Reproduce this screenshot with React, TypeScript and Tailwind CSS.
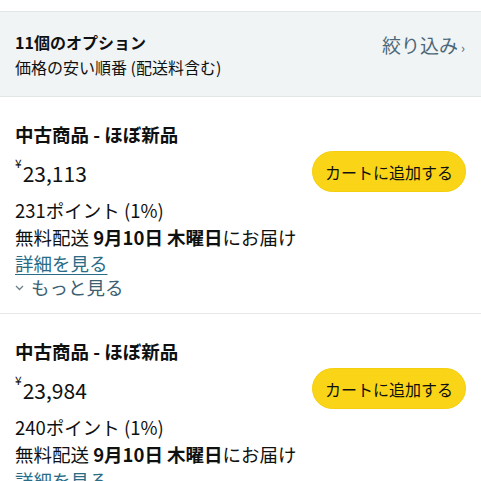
import React from 'react';

const font = { fontFamily: '"Noto Sans CJK JP", "Noto Sans", sans-serif' };

interface Offer {
  condition: string;
  price: string;
  points: string;
}

const offers: Offer[] = [
  { condition: '中古商品 - ほぼ新品', price: '23,113', points: '231ポイント (1%)' },
  { condition: '中古商品 - ほぼ新品', price: '23,984', points: '240ポイント (1%)' },
];

const OfferCard: React.FC<{ offer: Offer }> = ({ offer }) => (
  <div className="border-b border-[#e7e7e7] px-[15px] pt-[23px] pb-[14px]">
    <div className="text-[18.5px] font-bold leading-[28px] text-[#0f1111]">{offer.condition}</div>
    <div className="mt-[8px] flex h-[34px] items-center justify-between">
      <div className="flex items-start leading-[34px] text-[#0f1111]">
        <span className="mt-[-3px] mr-[1px] text-[12px] leading-[20px]">¥</span>
        <span className="text-[21px]">{offer.price}</span>
      </div>
      <button className="mt-[-3px] h-[41px] w-[154px] shrink-0 rounded-full border border-[#f5cf0e] bg-[#fad416] text-[16px] text-[#0f1111]">
        カートに追加する
      </button>
    </div>
    <div className="mt-[6px] text-[18.5px] leading-[28px] text-[#0f1111]">{offer.points}</div>
    <div className="text-[18.5px] leading-[27px] text-[#0f1111]">
      無料配送 <span className="font-bold">9月10日 木曜日</span>にお届け
    </div>
    <div className="text-[18.5px] leading-[24px] text-[#2a6c86] underline underline-offset-[3px]">詳細を見る</div>
    <div className="flex items-center gap-[7px] text-[18.5px] leading-[24px] text-[#3d5f72]">
      <svg width="9" height="6" viewBox="0 0 9 6" className="mt-[2px]">
        <path d="M1 1l3.5 3.5L8 1" fill="none" stroke="#6b7f8a" strokeWidth="1.3" />
      </svg>
      もっと見る
    </div>
  </div>
);

export default function App() {
  return (
    <div className="h-[481px] w-[481px] overflow-hidden bg-white" style={font}>
      <div className="h-[11px] bg-white" />
      <div className="flex items-start justify-between border-y border-[#e3e6e6] bg-[#f1f4f5] px-[15px] pt-[18px] pb-[16px]">
        <div>
          <div className="text-[16px] font-bold leading-[25px] text-[#0f1111]">11個のオプション</div>
          <div className="text-[16px] leading-[25px] text-[#0f1111]">価格の安い順番 (配送料含む)</div>
        </div>
        <div className="mr-[1px] flex items-baseline gap-[3px] text-[19px] leading-[30px] text-[#4c6878]">
          絞り込み<span className="text-[13px]">›</span>
        </div>
      </div>
      {offers.map((o, i) => (
        <OfferCard key={i} offer={o} />
      ))}
    </div>
  );
}
